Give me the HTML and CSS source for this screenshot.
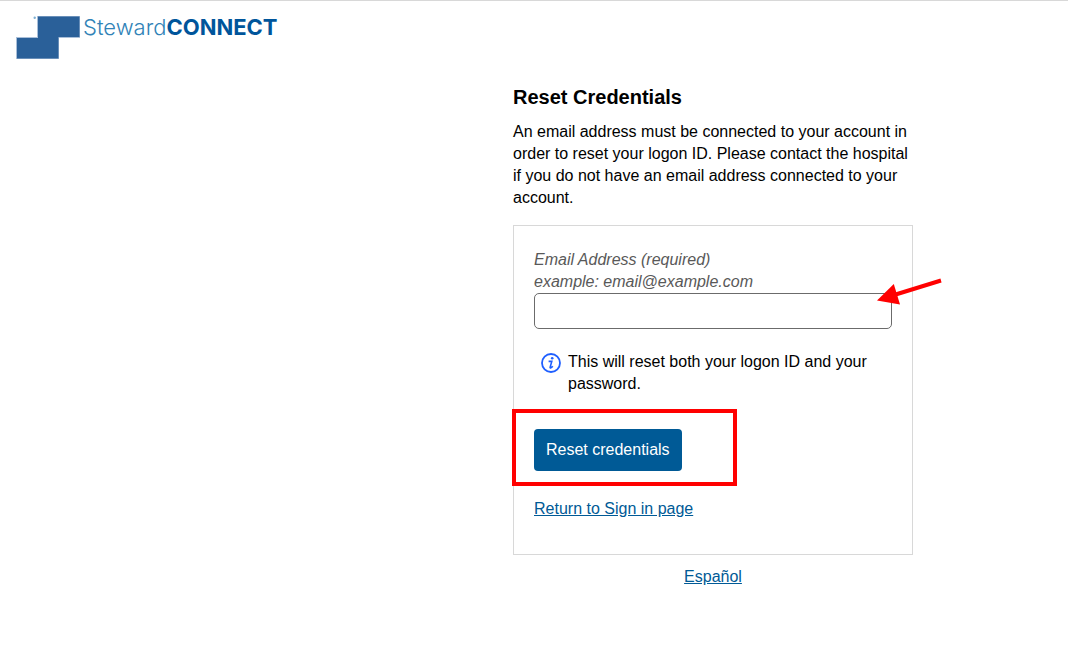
FILE: index.html
```html
<!DOCTYPE html>
<html lang="en">
<head>
    <meta charset="UTF-8">
    <meta name="viewport" content="width=device-width, initial-scale=1.0">
    <title>Reset Credentials</title>
    <link rel="stylesheet" href="styles.css">
</head>
<body>

    <header class="site-header">
        <svg class="logo-mark" viewBox="0 0 64 44" width="64" height="44" aria-hidden="true">
            <rect x="21" y="0" width="43" height="22" fill="#a9bfd9"/>
            <rect x="0" y="21" width="43" height="22" fill="#a9bfd9"/>
            <path d="M22 0.500H63.500V21H42.500V42.500H1V22H22Z" fill="#2a6099"/>
            <circle cx="18.700" cy="1.700" r="1.200" fill="#7fb0d3"/>
        </svg>
        <span class="logo-text">Steward<strong>CONNECT</strong></span>
    </header>

    <main class="page">
        <div class="reset">
            <h1>Reset Credentials</h1>
            <p class="intro">An email address must be connected to your account in order to reset your logon ID. Please contact the hospital if you do not have an email address connected to your account.</p>

            <form class="reset-form">
                <label for="email">Email Address (required)<br>example: email@example.com</label>
                <div class="email-field">
                    <input type="email" id="email" required>
                    <svg class="arrow" viewBox="0 0 66 28" width="66" height="28" aria-hidden="true">
                        <path d="M65 2.500L18 17" stroke="#ff0000" stroke-width="4" fill="none"/>
                        <path d="M1 22.500L17.800 6L24 26.500Z" fill="#ff0000"/>
                    </svg>
                </div>

                <div class="info">
                    <svg class="info-icon" viewBox="0 0 20 20" width="20" height="20" aria-hidden="true">
                        <circle cx="10" cy="10" r="9" fill="none" stroke="#1f5fff" stroke-width="1.800"/>
                        <circle cx="11.200" cy="5.300" r="1.300" fill="#1f5fff"/>
                        <path d="M7.600 8.400H10.800L9.100 14.300Q9 15.200 9.900 14.800Q10.900 14.300 11.800 13.200" fill="none" stroke="#1f5fff" stroke-width="1.600"/>
                    </svg>
                    <p>This will reset both your logon ID and your password.</p>
                </div>

                <div class="highlight">
                    <button type="submit">Reset credentials</button>
                </div>

                <a href="#">Return to Sign in page</a>
            </form>

            <a class="language" href="#" lang="es">Español</a>
        </div>
    </main>

</body>
</html>
```

FILE: styles.css
```css
/* Base Styles */
* {
    box-sizing: border-box;
}

body {
    margin: 0;
    border-top: 1px solid #d8d8d8;
    background-color: #fff;
    color: #000;
    font-family: "Liberation Sans", Arial, sans-serif;
    font-size: 16px;
    line-height: 22px;
}

h1,
p {
    margin: 0;
}

a {
    color: #005a96;
}

/* Header */
.site-header {
    display: flex;
    gap: 3px;
    padding: 15px 16px 0;
}

.logo-mark {
    flex: none;
}

.logo-text {
    color: #3183b7;
    font-family: Inter, sans-serif;
    font-size: 22px;
    font-weight: 300;
    line-height: 22px;
}

.logo-text strong {
    color: #00559b;
    font-weight: 700;
}

/* Reset form */
.page {
    display: flex;
    justify-content: flex-end;
    padding: 26px 155px 24px 16px;
}

.reset {
    display: flex;
    flex-direction: column;
    width: 100%;
    max-width: 400px;
}

.reset h1 {
    font-size: 20px;
    line-height: 22px;
}

.intro {
    margin-top: 13px;
}

.reset-form {
    margin-top: 16px;
    padding: 23px 20px 34px;
    border: 1px solid #d8d8d8;
}

.reset-form label {
    display: block;
    color: #595959;
    font-style: italic;
}

.email-field {
    position: relative;
}

.email-field input {
    display: block;
    width: 100%;
    height: 36px;
    padding: 0 8px;
    border: 1px solid #6b6b6b;
    border-radius: 5px;
    background-color: #fff;
    font: inherit;
}

.arrow {
    position: absolute;
    top: -15px;
    right: -50px;
}

.info {
    display: flex;
    gap: 7px;
    margin-top: 22px;
    padding-left: 7px;
}

.info-icon {
    flex: none;
    margin-top: 2px;
}

.highlight {
    width: 225px;
    margin: 14px 0 12px -22px;
    padding: 16px 18px 11px;
    border: 4px solid #ff0000;
}

.highlight button {
    display: block;
    height: 42px;
    padding: 0 12px;
    border: none;
    border-radius: 4px;
    background-color: #005a96;
    color: #fff;
    font: inherit;
    cursor: pointer;
}

.language {
    align-self: center;
    margin-top: 11px;
}
```
